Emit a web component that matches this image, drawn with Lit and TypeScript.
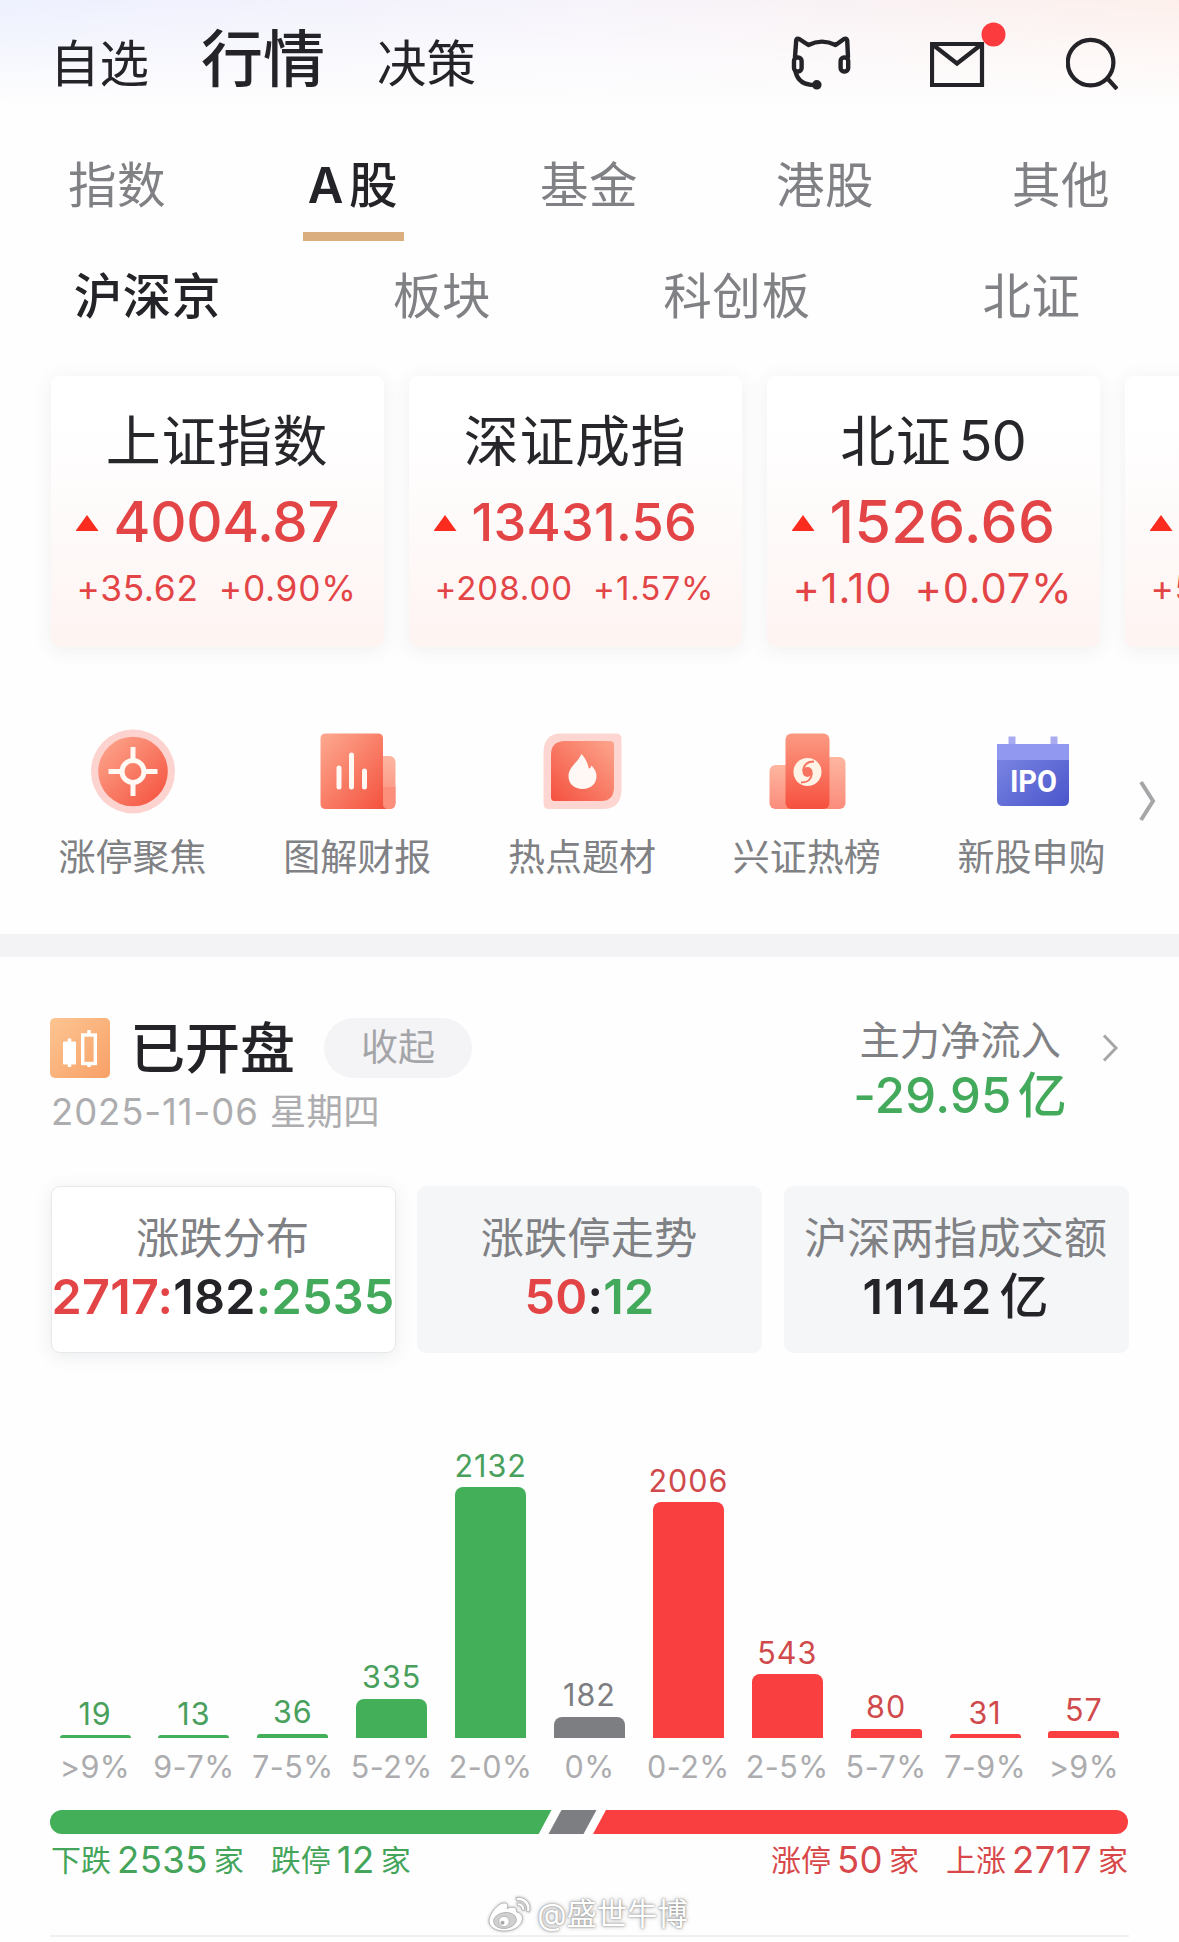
import { LitElement, html, svg, css } from "lit";
import { customElement, property } from "lit/decorators.js";
import { classMap } from "lit/directives/class-map.js";

const FONT = css`"Inter", "Noto Sans CJK SC", sans-serif`;

interface IndexQuote {
  name: string;
  suffix?: string;
  value: string;
  diff: string;
  pct: string;
  size: string;
}

const QUOTES: IndexQuote[] = [
  { name: "上证指数", value: "4004.87", diff: "+35.62", pct: "+0.90%", size: "md" },
  { name: "深证成指", value: "13431.56", diff: "+208.00", pct: "+1.57%", size: "sm" },
  { name: "北证", suffix: "50", value: "1526.66", diff: "+1.10", pct: "+0.07%", size: "lg" },
  { name: "", value: "", diff: "+5", pct: "", size: "md" },
];

const DISTRIBUTION: { range: string; count: number; tone: string }[] = [
  { range: ">9%", count: 19, tone: "down" },
  { range: "9-7%", count: 13, tone: "down" },
  { range: "7-5%", count: 36, tone: "down" },
  { range: "5-2%", count: 335, tone: "down" },
  { range: "2-0%", count: 2132, tone: "down" },
  { range: "0%", count: 182, tone: "flat" },
  { range: "0-2%", count: 2006, tone: "up" },
  { range: "2-5%", count: 543, tone: "up" },
  { range: "5-7%", count: 80, tone: "up" },
  { range: "7-9%", count: 31, tone: "up" },
  { range: ">9%", count: 57, tone: "up" },
];

const PX_PER_STOCK = 0.1176;

@customElement("top-nav")
class TopNav extends LitElement {
  static styles = css`
    :host {
      display: block;
    }
    .bar {
      display: flex;
      align-items: center;
      height: 125px;
      padding: 0 61px 0 50px;
      box-sizing: border-box;
      background: linear-gradient(180deg, rgba(254, 254, 254, 0) 0, #fefefe 106px),
        linear-gradient(90deg, #edf0fe 0, #f7f4fb 50%, #fdf0ec 100%);
      font-size: 49.5px;
      line-height: 74px;
      color: #232328;
    }
    .item {
      margin-right: 52px;
      padding-top: 2px;
    }
    .item.main {
      font-size: 62px;
      font-weight: 500;
      padding: 0 0 5px;
    }
    .icons {
      display: flex;
      align-items: center;
      margin-left: auto;
    }
    .cat {
      margin-right: 79px;
    }
    .mail {
      margin-right: 60px;
    }
    svg {
      display: block;
    }
  `;
  render() {
    return html`
      <div class="bar">
        <span class="item">自选</span>
        <span class="item main">行情</span>
        <span class="item">决策</span>
        <div class="icons">
          <svg class="cat" width="60" height="54" viewBox="0 0 60 54" fill="none" stroke="#232328" stroke-width="4.4" stroke-linecap="round" stroke-linejoin="round">
            <path d="M4 21 L5.2 4.4 Q5.6 1.8 8.2 3 L17.4 9 Q31 2.2 44.6 9 L53 3 Q55.6 1.8 56.2 4.4 L57 21" />
            <rect x="3" y="21.5" width="7.6" height="14" rx="3.4" />
            <rect x="49.6" y="21.5" width="7.6" height="14" rx="3.4" />
            <path d="M4.6 36 C6.5 44 13 49.4 25 49" />
            <circle cx="25.8" cy="48.8" r="2.6" fill="#232328" />
          </svg>
          <svg class="mail" width="76" height="90" viewBox="0 0 76 90" fill="none">
            <path d="M2 26 H52 V67 H2 Z M2.6 26.500 L27 45.500 L51.4 26.500" stroke="#232328" stroke-width="4.2" />
            <circle cx="63.5" cy="16.5" r="12" fill="#fb3b3d" />
          </svg>
          <svg width="52" height="54" viewBox="0 0 52 54" fill="none" stroke="#232328" stroke-width="4.2">
            <circle cx="24.6" cy="26.6" r="22.8" />
            <path d="M41.500 42.5 L51 53" />
          </svg>
        </div>
      </div>
    `;
  }
}

@customElement("tab-rows")
class TabRows extends LitElement {
  static styles = css`
    :host {
      display: block;
      font-size: 48.5px;
      letter-spacing: 0.6px;
      color: #808184;
    }
    .row {
      display: grid;
      text-align: center;
    }
    .primary {
      grid-template-columns: repeat(5, 1fr);
      height: 119px;
      margin-left: -1px;
    }
    .secondary {
      grid-template-columns: repeat(4, 1fr);
      line-height: 101px;
      padding-top: 2px;
    }
    .tab {
      display: flex;
      flex-direction: column;
      align-items: center;
    }
    .label {
      padding-top: 14px;
      line-height: 93px;
    }
    .latin {
      margin-right: 5px;
      font-size: 49px;
      font-weight: 600;
    }
    .on {
      color: #232328;
      font-weight: 500;
    }
    .line {
      width: 101px;
      height: 9px;
      background: #dbae80;
    }
  `;
  render() {
    return html`
      <div class="row primary">
        <div class="tab"><span class="label">指数</span></div>
        <div class="tab on">
          <span class="label"><span class="latin">A</span>股</span>
          <span class="line"></span>
        </div>
        <div class="tab"><span class="label">基金</span></div>
        <div class="tab"><span class="label">港股</span></div>
        <div class="tab"><span class="label">其他</span></div>
      </div>
      <div class="row secondary">
        <span class="on">沪深京</span>
        <span>板块</span>
        <span>科创板</span>
        <span>北证</span>
      </div>
    `;
  }
}

@customElement("index-card")
class IndexCard extends LitElement {
  @property({ attribute: false }) quote!: IndexQuote;

  static styles = css`
    :host {
      display: block;
      flex: none;
      width: 333px;
      height: 271px;
      box-sizing: border-box;
      padding-top: 29px;
      border-radius: 9px;
      background: linear-gradient(180deg, #fff 15%, #fefafa 55%, #fef4f2 100%);
      box-shadow: 0 3px 20px rgba(60, 60, 70, 0.08);
      color: #e34547;
      white-space: nowrap;
    }
    .name {
      height: 71px;
      line-height: 72px;
      text-align: center;
      font-size: 55px;
      letter-spacing: 0.6px;
      color: #27272b;
    }
    .suffix {
      margin-left: 7px;
      font-size: 56px;
      letter-spacing: -1px;
    }
    .value {
      display: flex;
      align-items: center;
      height: 91px;
      padding-left: 25px;
      font-weight: 500;
    }
    .arrow {
      width: 23px;
      height: 16px;
      margin: 3px 15px 0 0;
      background: #fb2b1e;
      clip-path: polygon(50% 0, 100% 100%, 0 100%);
    }
    .change {
      display: flex;
      justify-content: space-between;
      line-height: 43px;
      width: 280px;
      margin-left: 26px;
    }
    .md .value { font-size: 56.3px; letter-spacing: -0.3px; }
    .md .change { font-size: 35.3px; letter-spacing: 0.7px; }
    .sm .value { font-size: 52.2px; letter-spacing: 0.3px; }
    .sm .change { font-size: 33px; letter-spacing: 1px; }
    .lg .value { font-size: 59px; letter-spacing: 0.4px; }
    .lg .change { font-size: 41.5px; letter-spacing: 0.8px; }
  `;
  render() {
    const q = this.quote;
    return html`
      <div class=${q.size}>
        <div class="name">${q.name}${q.suffix ? html`<span class="suffix">${q.suffix}</span>` : ""}</div>
        <div class="value"><span class="arrow"></span><span>${q.value}</span></div>
        <div class="change"><span>${q.diff}</span><span>${q.pct}</span></div>
      </div>
    `;
  }
}

@customElement("shortcut-grid")
class ShortcutGrid extends LitElement {
  static styles = css`
    :host {
      display: flex;
      align-items: flex-start;
      height: 207px;
      padding: 80px 0 0 20px;
      border-bottom: 23.5px solid #f3f3f5;
    }
    .grid {
      display: grid;
      grid-template-columns: repeat(5, 224.8px);
      justify-items: center;
    }
    .cell {
      display: flex;
      flex-direction: column;
      align-items: center;
      gap: 20px;
      font-size: 37px;
      line-height: 42px;
      color: #7f8184;
    }
    svg {
      display: block;
    }
    .more {
      margin: 52px 0 0 -5.5px;
    }
    .ipo {
      font: 700 31.5px Roboto, sans-serif;
    }
  `;

  private icons = [
    svg`
      <circle cx="46" cy="44.5" r="42" fill="#fdd3cf" />
      <circle cx="46" cy="44.5" r="34.8" fill="url(#g)" />
      <g fill="none" stroke="#fff8f3" stroke-width="5">
        <circle cx="46" cy="44.5" r="11" />
        <path d="M46 20 V33 M46 56 V69 M21.5 44.5 H34.5 M57.5 44.5 H70.5" />
      </g>`,
    svg`
      <rect x="58" y="29" width="25.5" height="53" rx="6" fill="url(#gs)" />
      <path d="M14 6.5 H66 Q71 6.5 71 11.5 V76 Q71 82 77 82 H14 Q8.500 82 8.500 77 V11.500 Q8.500 6.500 14 6.500 Z" fill="url(#g)" />
      <path d="M71 60 V76 Q71 82 77.500 82 Q83.500 82 83.500 76 V60 Z" fill="#fb8f7c" />
      <g stroke="#fff8f3" stroke-width="5" stroke-linecap="round">
        <path d="M27 41 V60 M39.500 28 V60 M52.500 44 V60" />
      </g>`,
    svg`
      <path d="M24 6.500 H79 Q84.500 6.500 84.500 12 V62 Q84.500 82 66 82 H12 Q6.500 82 6.500 76 V26 Q6.500 6.500 24 6.500 Z" fill="#fdd5d1" />
      <path d="M28 14 H73 Q77 14 77 18 V60 Q77 74 64 74 H17 Q14 74 14 70 V28 Q14 14 28 14 Z" fill="url(#gd)" />
      <path d="M44.500 27 C48 31 50.500 35 51.800 41.500 Q54 41 54.500 38.500 C58 42 59.500 45.500 59.500 49 C59.500 57 53.500 62 45.500 62 C37.500 62 31.500 57 31.500 49 C31.500 40 40.500 36 44.500 27 Z" fill="#fff8f5" />`,
    svg`
      <rect x="7.500" y="38" width="30" height="44" rx="6" fill="url(#gs)" />
      <rect x="50" y="30" width="33.500" height="52" rx="6" fill="url(#gs)" />
      <rect x="23.500" y="6.500" width="44" height="75.500" rx="6" fill="url(#gv)" />
      <circle cx="45.500" cy="45" r="14" fill="#fff3e6" />
      <circle cx="45.500" cy="45" r="5" fill="#f8735f" />
      <path d="M41 44 C41.500 38 45.500 34.500 52 34.500 M50 46 C49.500 52 45.500 55.500 39 55.500" fill="none" stroke="#f8735f" stroke-width="1.800" />`,
    svg`
      <rect x="21.500" y="9.500" width="7" height="9" fill="#a9abf0" />
      <rect x="63.500" y="9.500" width="7" height="9" fill="#a9abf0" />
      <path d="M10 17 H82 V73 Q82 79 76 79 H16 Q10 79 10 73 Z" fill="url(#gb)" />
      <path d="M10 17 H82 V33 H10 Z" fill="#9098f0" />
      <text x="50.500" y="65.500" text-anchor="middle" class="ipo" fill="#fff" transform="scale(0.92 1)">IPO</text>`,
  ];

  private names = ["涨停聚焦", "图解财报", "热点题材", "兴证热榜", "新股申购"];

  render() {
    return html`
      <div class="grid">
        ${this.names.map(
          (name, i) => html`
            <div class="cell">
              <svg width="90" height="90" viewBox="0 0 90 90">
                <defs>
                  <linearGradient id="g" x1="0" y1="0" x2="1" y2="1">
                    <stop offset="0.05" stop-color="#fda58c" />
                    <stop offset="0.95" stop-color="#f4533f" />
                  </linearGradient>
                  <linearGradient id="gd" x1="1" y1="0" x2="0" y2="1">
                    <stop offset="0" stop-color="#fda58c" />
                    <stop offset="1" stop-color="#f4513f" />
                  </linearGradient>
                  <linearGradient id="gv" x1="0" y1="0" x2="0" y2="1">
                    <stop offset="0" stop-color="#fc9a82" />
                    <stop offset="1" stop-color="#f6503e" />
                  </linearGradient>
                  <linearGradient id="gs" x1="0" y1="0" x2="0" y2="1">
                    <stop offset="0" stop-color="#fdb6a0" />
                    <stop offset="1" stop-color="#fb8c7c" />
                  </linearGradient>
                  <linearGradient id="gb" x1="0" y1="0" x2="1" y2="1">
                    <stop offset="0.2" stop-color="#7580e0" />
                    <stop offset="1" stop-color="#4a55cb" />
                  </linearGradient>
                </defs>
                ${this.icons[i]}
              </svg>
              <span>${name}</span>
            </div>
          `
        )}
      </div>
      <svg class="more" width="20" height="44" viewBox="0 0 20 44" fill="none" stroke="#a5a6a8" stroke-width="4">
        <path d="M3 3 L15 22 L3 41" />
      </svg>
    `;
  }
}

@customElement("market-head")
class MarketHead extends LitElement {
  static styles = css`
    :host {
      display: flex;
      justify-content: space-between;
      height: 116.5px;
      padding: 60.5px 59px 0 50px;
    }
    .title {
      display: flex;
      align-items: center;
      height: 60px;
    }
    .status {
      margin: 0 29px 0 20px;
      padding-top: 1px;
      font-size: 55px;
      line-height: 60px;
      font-weight: 500;
      color: #232328;
    }
    .pill {
      width: 148px;
      height: 60px;
      border-radius: 30px;
      background: #f4f4f6;
      font-size: 37px;
      line-height: 59px;
      text-align: center;
      color: #a4a5a9;
    }
    .date {
      margin: 12.5px 0 0 1px;
      font-size: 36.5px;
      line-height: 44px;
      letter-spacing: 0.9px;
      color: #adadb0;
    }
    .weekday {
      letter-spacing: 0.2px;
    }
    .flow {
      display: flex;
      align-items: flex-start;
    }
    .figures {
      display: flex;
      flex-direction: column;
      align-items: center;
    }
    .caption {
      font-size: 40.3px;
      line-height: 46px;
      color: #808184;
    }
    .amount {
      display: flex;
      align-items: center;
      gap: 6px;
      height: 64px;
      font-size: 49px;
      line-height: 64px;
      letter-spacing: 0.3px;
      font-weight: 500;
      color: #43a95b;
    }
    .go {
      margin: 15px 0 0 35px;
    }
    svg {
      display: block;
    }
  `;
  render() {
    return html`
      <div>
        <div class="title">
          <svg width="60" height="60" viewBox="0 0 60 60">
            <defs>
              <linearGradient id="o" x1="0" y1="0" x2="1" y2="1">
                <stop offset="0" stop-color="#fdc592" />
                <stop offset="1" stop-color="#f8a067" />
              </linearGradient>
            </defs>
            <rect width="60" height="60" rx="5" fill="url(#o)" />
            <g fill="#fff" stroke="#fff">
              <rect x="13" y="23.500" width="13" height="23" stroke="none" rx="1" />
              <path d="M19.500 20.500 V49" stroke-width="3.500" />
              <rect x="32.700" y="17" width="12.600" height="28.500" fill="none" stroke-width="3.400" />
              <path d="M39 12 V16 M39 46 V49" stroke-width="3.500" />
            </g>
          </svg>
          <span class="status">已开盘</span>
          <span class="pill">收起</span>
        </div>
        <div class="date">2025-11-06 <span class="weekday">星期四</span></div>
      </div>
      <div class="flow">
        <div class="figures">
          <span class="caption">主力净流入</span>
          <span class="amount"><span>-29.95</span><span>亿</span></span>
        </div>
        <svg class="go" width="18" height="30" viewBox="0 0 18 30" fill="none" stroke="#a5a6a8" stroke-width="3">
          <path d="M2 2.500 L14 15 L2 27.500" />
        </svg>
      </div>
    `;
  }
}

@customElement("stat-tabs")
class StatTabs extends LitElement {
  static styles = css`
    :host {
      display: grid;
      grid-template-columns: repeat(3, 345px);
      justify-content: space-between;
      margin: 52px 50.5px 0;
    }
    .tab {
      height: 167px;
      box-sizing: border-box;
      padding-top: 29px;
      border-radius: 9px;
      background: #f5f6f8;
      text-align: center;
      white-space: nowrap;
    }
    .tab.on {
      padding-top: 28px;
      border: 1px solid #e6e8ea;
      background: #fff;
      box-shadow: 0 3px 18px rgba(70, 80, 100, 0.11);
    }
    .name {
      margin-left: -1px;
      font-size: 43.3px;
      line-height: 46px;
      color: #808184;
    }
    .nums {
      display: flex;
      justify-content: center;
      align-items: center;
      height: 71px;
      font-size: 48.5px;
      line-height: 71px;
      letter-spacing: 0.25px;
      font-weight: 600;
      color: #232328;
    }
    .wide {
      letter-spacing: 1.2px;
    }
    .unit {
      margin-left: 7px;
      font-size: 49px;
      font-weight: 500;
    }
    .up {
      color: #e34547;
    }
    .down {
      color: #43a95b;
    }
  `;
  render() {
    return html`
      <div class="tab on">
        <div class="name">涨跌分布</div>
        <div class="nums"><span class="up">2717:</span><span>182</span><span class="down">:2535</span></div>
      </div>
      <div class="tab">
        <div class="name">涨跌停走势</div>
        <div class="nums"><span class="up">50</span><span>:</span><span class="down">12</span></div>
      </div>
      <div class="tab">
        <div class="name">沪深两指成交额</div>
        <div class="nums wide"><span>11142</span><span class="unit">亿</span></div>
      </div>
    `;
  }
}

@customElement("rise-fall-chart")
class RiseFallChart extends LitElement {
  static styles = css`
    :host {
      display: block;
    }
    .chart {
      display: grid;
      grid-template-columns: repeat(11, 98.9px);
      justify-content: center;
    }
    .col {
      display: flex;
      flex-direction: column;
      align-items: center;
      justify-content: flex-end;
      height: 430px;
      white-space: nowrap;
      font-size: 30.5px;
      line-height: 32px;
    }
    .count {
      margin-bottom: 5.5px;
      letter-spacing: 1px;
    }
    .bar {
      width: 71px;
      border-radius: 8px 8px 0 0;
      background: currentColor;
    }
    .bar.tiny {
      border-radius: 3px 3px 0 0;
    }
    .range {
      margin-top: 13px;
      letter-spacing: 0.5px;
      color: #acacaf;
    }
    .down {
      color: #43af58;
    }
    .up {
      color: #f93f40;
    }
    .flat {
      color: #7d7e82;
    }
    .down .count {
      color: #48a05c;
    }
    .up .count {
      color: #d04a4c;
    }
    .balance {
      display: block;
      margin: 27px 0 3px 50px;
    }
    .totals {
      display: flex;
      align-items: center;
      height: 46px;
      padding: 0 51px;
      font-size: 30px;
      line-height: 46px;
    }
    .group {
      display: flex;
      align-items: center;
      gap: 6px;
      margin-right: 27px;
    }
    .group.last {
      margin-right: 0;
    }
    .group.first-up {
      margin-left: auto;
    }
    .n {
      font-size: 36.5px;
      letter-spacing: 0.4px;
    }
    .totals .down {
      color: #44a55a;
    }
    .totals .up {
      color: #d8484a;
    }
  `;

  private total(label: string, n: number, cls: string) {
    return html`<span class="group ${cls}"><span>${label}</span><span class="n">${n}</span><span>家</span></span>`;
  }

  render() {
    return html`
      <div class="chart">
        ${DISTRIBUTION.map((d) => {
          const h = Math.max(3, d.count * PX_PER_STOCK);
          return html`
            <div class="col ${d.tone}">
              <span class="count">${d.count}</span>
              <span class=${classMap({ bar: true, tiny: h < 12 })} style="height:${h.toFixed(1)}px"></span>
              <span class="range">${d.range}</span>
            </div>
          `;
        })}
      </div>
      <svg class="balance" width="1078" height="24" viewBox="0 0 1078 24">
        <path d="M12 0 H501.500 L488.700 24 H12 A12 12 0 0 1 12 0 Z" fill="#43af58" />
        <path d="M511.500 0 H546.500 L533.500 24 H498.500 Z" fill="#7d7e82" />
        <path d="M556 0 H1066 A12 12 0 0 1 1066 24 H543 Z" fill="#f93f40" />
      </svg>
      <div class="totals">
        ${this.total("下跌", 2535, "down")} ${this.total("跌停", 12, "down")}
        ${this.total("涨停", 50, "up first-up")} ${this.total("上涨", 2717, "up last")}
      </div>
    `;
  }
}

@customElement("author-mark")
class AuthorMark extends LitElement {
  static styles = css`
    :host {
      display: flex;
      justify-content: center;
      align-items: center;
      gap: 5px;
      height: 36px;
      margin: 13px 50px 0;
      padding: 0 3px 3px 0;
      border-bottom: 2px solid #f0f0f1;
      font-size: 30.3px;
      line-height: 38px;
      color: #fff;
      text-shadow: 0 0 2px rgba(90, 90, 90, 0.75), 0 0 4px rgba(90, 90, 90, 0.5);
    }
    svg {
      display: block;
      overflow: visible;
      filter: drop-shadow(0 0 1.5px rgba(110, 110, 110, 0.55));
    }
  `;
  render() {
    return html`
      <svg width="44" height="36" viewBox="0 0 44 36" fill="#fff" stroke="#b4b4b4" stroke-width="0.9">
        <path d="M17 7 C20 7.500 20 10 19 12.500 C24 10.500 29.500 10.500 28.500 16 C33 17 35.500 20 34 25 C32 31 25 35 16 35 C7 35 1 30.500 1 25 C1 18 11 5.500 17 7 Z" />
        <ellipse cx="17" cy="24.500" rx="11.500" ry="8" fill="#cfcfcf" transform="rotate(-8 17 24.500)" />
        <circle cx="16" cy="25.500" r="5.200" />
        <circle cx="14.500" cy="26.800" r="2" fill="#a9a9a9" stroke="none" />
        <path d="M28 1.500 C37 0 44 7 41.500 16 L38.500 15.200 C40 9 35.500 3.800 28.800 4.500 Z" />
        <path d="M29 7 C34 6.200 37.500 10 36.300 14.500 L33.600 13.800 C34 11 32.500 9.300 29.500 9.700 Z" />
      </svg>
      <span>@盛世牛博</span>
    `;
  }
}

@customElement("app-root")
class AppRoot extends LitElement {
  static styles = css`
    :host {
      display: block;
      width: 1179px;
      height: 1942px;
      overflow: hidden;
      background: #fefefe;
      font-family: ${FONT};
      font-weight: 400;
    }
    .cards {
      display: flex;
      gap: 25px;
      height: 271px;
      padding: 29px 0 0 50.5px;
    }
  `;
  render() {
    return html`
      <top-nav></top-nav>
      <tab-rows></tab-rows>
      <div class="cards">${QUOTES.map((q) => html`<index-card .quote=${q}></index-card>`)}</div>
      <shortcut-grid></shortcut-grid>
      <market-head></market-head>
      <stat-tabs></stat-tabs>
      <rise-fall-chart></rise-fall-chart>
      <author-mark></author-mark>
    `;
  }
}
